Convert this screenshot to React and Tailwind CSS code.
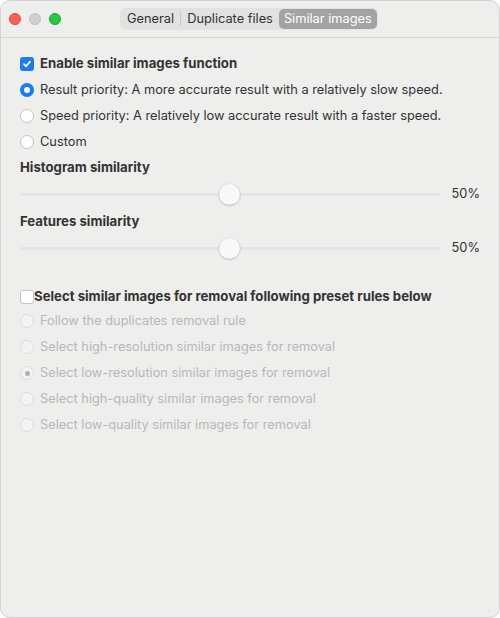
import React from 'react';

const FONT = { fontFamily: '"Inter", "Liberation Sans", sans-serif' };

const Check = ({ checked }) => (
    <div className={`w-[14px] h-[14px] rounded-[3px] flex items-center justify-center shrink-0 ${checked ? 'bg-[#1a7cf5]' : 'bg-white border border-[#c4c4c4]'}`}>
        {checked && (
            <svg width="10" height="10" viewBox="0 0 10 10">
                <path d="M2 5.2 L4.1 7.3 L8 2.6" fill="none" stroke="white" strokeWidth="1.8" strokeLinecap="round" strokeLinejoin="round" />
            </svg>
        )}
    </div>
);

const Radio = ({ checked, disabled }) => {
    if (checked && !disabled) {
        return (
            <div className="w-[14px] h-[14px] rounded-full bg-[#1a7cf5] flex items-center justify-center shrink-0">
                <div className="w-[6px] h-[6px] rounded-full bg-white"></div>
            </div>
        );
    }
    return (
        <div className={`w-[14px] h-[14px] rounded-full flex items-center justify-center shrink-0 border ${disabled ? 'bg-[#f3f3f3] border-[#dcdcdc]' : 'bg-white border-[#c4c4c4]'}`}>
            {checked && <div className="w-[5px] h-[5px] rounded-full bg-[#b0b0b0]"></div>}
        </div>
    );
};

const Slider = ({ value }) => (
    <div className="flex items-center h-[26px]">
        <div className="relative w-[420px] h-[3px] rounded-full bg-[#e4e4e4]">
            <div
                className="absolute top-1/2 w-[21px] h-[21px] -mt-[10.5px] -ml-[10.5px] rounded-full bg-[#f8f8f8] shadow-[0_0.5px_2px_rgba(0,0,0,0.3)]"
                style={{ left: `${value}%` }}
            ></div>
        </div>
        <span className="ml-[12px] text-[12.8px] text-[#333]">{value}%</span>
    </div>
);

const RadioRow = ({ label, checked, disabled }) => (
    <div className="flex items-center gap-[6px] h-[26px]">
        <Radio checked={checked} disabled={disabled} />
        <span className={`text-[12.8px] ${disabled ? 'text-[#b8b8b8]' : 'text-[#333]'}`}>{label}</span>
    </div>
);

const App = () => {
    const rules = [
        { label: 'Follow the duplicates removal rule' },
        { label: 'Select high-resolution similar images for removal' },
        { label: 'Select low-resolution similar images for removal', checked: true },
        { label: 'Select high-quality similar images for removal' },
        { label: 'Select low-quality similar images for removal' },
    ];

    return (
        <div className="w-[500px] h-[618px] bg-white" style={FONT}>
            <div className="w-full h-full rounded-[10px] border border-[#d2d2d2] bg-[#eeeeed] overflow-hidden flex flex-col">
                {/* Title bar */}
                <div className="h-[37px] flex items-center border-b border-[#d6d6d6] relative shrink-0">
                    <div className="flex items-center gap-[8px] pl-[8px]">
                        <div className="w-[12px] h-[12px] rounded-full bg-[#fe5f57] border border-[#e2463f]"></div>
                        <div className="w-[12px] h-[12px] rounded-full bg-[#d0d0d0] border border-[#bdbdbd]"></div>
                        <div className="w-[12px] h-[12px] rounded-full bg-[#28c840] border border-[#1aab29]"></div>
                    </div>
                    <div className="absolute left-[119px] top-[7px] h-[22px] flex items-center rounded-[6px] bg-[#e2e2e2] px-[1px] text-[12.8px] text-[#333]">
                        <span className="px-[6px]">General</span>
                        <div className="w-px h-[14px] bg-[#c8c8c8]"></div>
                        <span className="px-[6px]">Duplicate files</span>
                        <span className="px-[5px] h-[20px] flex items-center rounded-[5px] bg-[#a3a3a3] text-white">Similar images</span>
                    </div>
                </div>

                {/* Content */}
                <div className="flex flex-col px-[19px] pt-[13px]">
                    <div className="flex items-center gap-[6px] h-[26px]">
                        <Check checked />
                        <span className="text-[13.2px] font-bold text-[#333]">Enable similar images function</span>
                    </div>
                    <RadioRow label="Result priority: A more accurate result with a relatively slow speed." checked />
                    <RadioRow label="Speed priority: A relatively low accurate result with a faster speed." />
                    <RadioRow label="Custom" />

                    <div className="h-[26px] flex items-center text-[13.2px] font-bold text-[#333]">Histogram similarity</div>
                    <Slider value={50} />
                    <div className="h-[27px] mt-[1px] pt-[1px] flex items-center text-[13.2px] font-bold text-[#333]">Features similarity</div>
                    <Slider value={50} />

                    <div className="flex items-center h-[22px] mt-[25px]">
                        <Check />
                        <span className="text-[13.2px] font-bold text-[#333]">Select similar images for removal following preset rules below</span>
                    </div>
                    {rules.map((r) => (
                        <RadioRow key={r.label} label={r.label} checked={r.checked} disabled />
                    ))}
                </div>
            </div>
        </div>
    );
};

export default App;
